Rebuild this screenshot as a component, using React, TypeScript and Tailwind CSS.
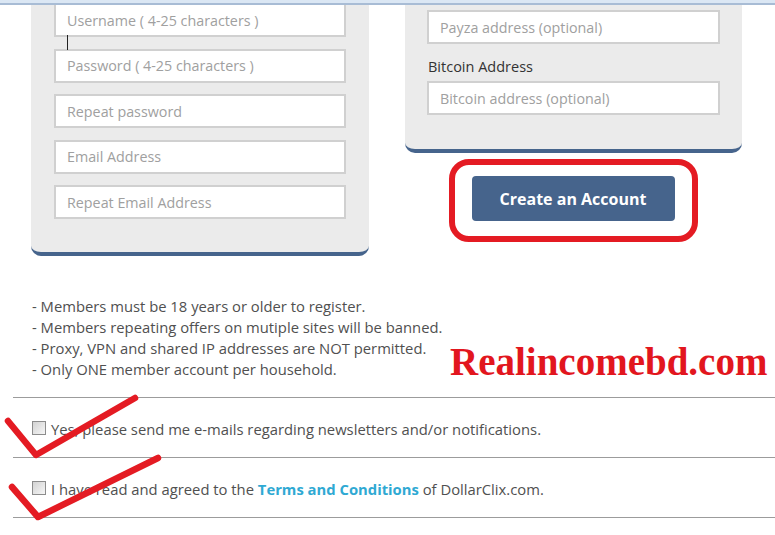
import React from "react";

const inputCls =
  "block w-full h-[34px] border-2 border-[#d0d0d0] bg-white px-[11px] text-[14.3px] text-[#333] placeholder:text-[#a0a0a0] outline-none font-['Open_Sans',sans-serif]";

function Checkbox() {
  return (
    <span className="block w-[14px] h-[14px] border border-[#8c8c8c] bg-linear-to-br from-[#d2d2d2] to-[#f6f6f6] shrink-0" />
  );
}

export default function App() {
  return (
    <div className="relative w-[775px] h-[535px] overflow-hidden bg-white font-['Open_Sans',sans-serif] text-[#555]">
      {/* panels */}
      <div className="flex gap-[36px] pl-[31px]">
        <div className="w-[338px] bg-[#ebebeb] rounded-b-[10px] border-b-4 border-[#46648c] pt-[3px] px-[23px] pb-[33px] flex flex-col gap-[11.5px]">
          <input className={inputCls} placeholder="Username ( 4-25 characters )" />
          <input className={inputCls} placeholder="Password ( 4-25 characters )" />
          <input className={inputCls} placeholder="Repeat password" />
          <input className={inputCls} placeholder="Email Address" />
          <input className={inputCls} placeholder="Repeat Email Address" />
        </div>
        <div className="w-[337px] flex flex-col items-center">
          <div className="w-full bg-[#ebebeb] rounded-b-[10px] border-b-4 border-[#46648c] pt-[10px] px-[22px] pb-[34px]">
            <input className={inputCls} placeholder="Payza address (optional)" />
            <div className="mt-[12px] mb-[4px] text-[14.5px] leading-[21px] text-[#333] pl-[1px]">Bitcoin Address</div>
            <input className={inputCls} placeholder="Bitcoin address (optional)" />
          </div>
          <div className="mt-[6px] -ml-[1px] border-[6px] border-[#e41b23] rounded-[20px] pt-[11px] pb-[15px] px-[17px]">
            <button className="w-[203px] h-[45px] rounded-[4px] bg-[#46648c] text-white font-bold text-[16px] font-['Open_Sans',sans-serif]">
              Create an Account
            </button>
          </div>
        </div>
      </div>

      {/* rules */}
      <div className="mt-[39.5px] pl-[32px] text-[14.8px] leading-[21px] text-[#505050]">
        <div>- Members must be 18 years or older to register.</div>
        <div>- Members repeating offers on mutiple sites will be banned.</div>
        <div>- Proxy, VPN and shared IP addresses are NOT permitted.</div>
        <div>- Only ONE member account per household.</div>
      </div>

      {/* checkbox rows */}
      <div className="mt-[17.5px] ml-[13px]">
        <div className="h-[60px] border-t border-[#9c9c9c] flex items-center pl-[19px] gap-[5px]">
          <Checkbox />
          <span className="pt-[4px] text-[14.8px] leading-[21px] text-[#505050]">
            Yes, please send me e-mails regarding newsletters and/or notifications.
          </span>
        </div>
        <div className="h-[61px] border-y border-[#9c9c9c] flex items-center pl-[19px] gap-[5px]">
          <Checkbox />
          <span className="pt-[4px] text-[14.8px] leading-[21px] text-[#505050]">
            I have read and agreed to the{" "}
            <span className="font-bold text-[#2fa9d3]">Terms and Conditions</span> of DollarClix.com.
          </span>
        </div>
      </div>

      {/* overlays */}
      <div className="absolute top-0 left-0 right-0 h-[5px] bg-[#dbe7f4] border-b-2 border-[#a8bcd5]" />
      <span className="absolute left-[67px] top-[35px] w-px h-[15px] bg-[#222]" />
      <div className="absolute left-[450px] top-[342px] text-[39px] leading-none font-bold text-[#e2161e] font-['Liberation_Serif','Times_New_Roman',serif]">
        Realincomebd.com
      </div>
      <svg className="absolute inset-0 pointer-events-none" width="775" height="535" viewBox="0 0 775 535">
        <path d="M8 421 L36 455 L135 398" fill="none" stroke="#e41b23" strokeWidth="6.5" strokeLinecap="round" strokeLinejoin="round" />
        <path d="M12 487 L38 517 L158 458" fill="none" stroke="#e41b23" strokeWidth="6.5" strokeLinecap="round" strokeLinejoin="round" />
      </svg>
    </div>
  );
}
